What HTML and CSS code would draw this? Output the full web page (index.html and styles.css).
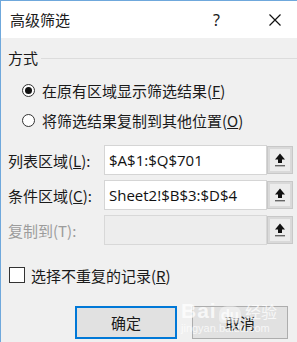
FILE: index.html
```html
<!DOCTYPE html>
<html lang="zh">
<head>
<meta charset="utf-8">
<link rel="stylesheet" href="styles.css">
</head>
<body>
<div class="dialog">
  <div class="titlebar">
    <span class="title">高级筛选</span>
    <span class="help">?</span>
    <span class="close">
      <svg width="12" height="12" viewBox="0 0 12 12"><path d="M0.5 0.5 L11.5 11.5 M11.5 0.5 L0.5 11.5" stroke="#111" stroke-width="1.2" fill="none"/></svg>
    </span>
  </div>
  <div class="content">
    <div class="group-head"><span>方式</span><span class="rule"></span></div>
    <div class="radio-row">
      <span class="radio checked"></span><span>在原有区域显示筛选结果(<u>F</u>)</span>
    </div>
    <div class="radio-row">
      <span class="radio"></span><span>将筛选结果复制到其他位置(<u>O</u>)</span>
    </div>
    <div class="fields">
      <div class="field">
        <span class="label">列表区域(<u>L</u>):</span>
        <span class="input">$A$1:$Q$701</span>
        <span class="picker"><svg width="12" height="16" viewBox="0 0 12 16"><path d="M6 1.5 L11 7.5 H8 V11 H4 V7.5 H1 Z" fill="#111"/><rect x="1" y="13" width="10" height="1.4" fill="#666"/></svg></span>
      </div>
      <div class="field">
        <span class="label">条件区域(<u>C</u>):</span>
        <span class="input">Sheet2!$B$3:$D$4</span>
        <span class="picker"><svg width="12" height="16" viewBox="0 0 12 16"><path d="M6 1.5 L11 7.5 H8 V11 H4 V7.5 H1 Z" fill="#111"/><rect x="1" y="13" width="10" height="1.4" fill="#666"/></svg></span>
      </div>
      <div class="field disabled">
        <span class="label">复制到(T):</span>
        <span class="input"></span>
        <span class="picker"><svg width="12" height="16" viewBox="0 0 12 16"><path d="M6 1.5 L11 7.5 H8 V11 H4 V7.5 H1 Z" fill="#111"/><rect x="1" y="13" width="10" height="1.4" fill="#666"/></svg></span>
      </div>
    </div>
    <div class="check-row">
      <span class="checkbox"></span><span>选择不重复的记录(<u>R</u>)</span>
    </div>
    <div class="buttons">
      <span class="btn default">确定</span>
      <span class="btn">取消</span>
    </div>
  </div>
  <div class="watermark">
    <div class="wm-top"><span class="wm-bai">Bai</span><span class="wm-du">du</span><span class="wm-jy">经验</span></div>
    <div class="wm-url">jingyan.baidu.com</div>
  </div>
</div>
</body>
</html>
```
FILE: styles.css
```css
html, body {
  margin: 0;
  padding: 0;
  background: #f0f0f0;
}
body {
  font-family: "Noto Sans CJK SC", "Noto Sans", sans-serif;
  font-size: 15px;
  color: #1a1a1a;
  width: 297px;
  height: 342px;
  overflow: hidden;
}
.dialog {
  position: relative;
  height: 341px;
  border-top: 1px solid #6fa8dc;
  border-left: 1px solid #6fa8dc;
}
.titlebar {
  height: 37px;
  background: #fff;
  display: flex;
  align-items: center;
  padding-left: 9px;
}
.title {
  flex: 1;
  line-height: 20px;
}
.help {
  width: 56px;
  font-family: "Noto Sans", sans-serif;
  font-size: 16px;
  line-height: 20px;
}
.close {
  width: 28px;
  display: flex;
  align-items: center;
}
.content {
  padding-left: 7px;
}
.group-head {
  margin-top: 10px;
  height: 20px;
  display: flex;
  align-items: center;
  gap: 3px;
  line-height: 20px;
}
.rule {
  flex: 1;
  height: 1px;
  background: #dcdcdc;
  margin-top: 1px;
}
.radio-row {
  height: 30px;
  display: flex;
  align-items: center;
  gap: 7px;
  padding-left: 14px;
}
.group-head + .radio-row { margin-top: 7px; }
.radio {
  width: 11px;
  height: 11px;
  border: 1px solid #333;
  border-radius: 50%;
  background: #fff;
  display: flex;
  align-items: center;
  justify-content: center;
}
.radio.checked::after {
  content: "";
  width: 7px;
  height: 7px;
  border-radius: 50%;
  background: #111;
}
.fields {
  margin-top: 10px;
  display: flex;
  flex-direction: column;
  gap: 5px;
}
.field {
  display: grid;
  grid-template-columns: 96px 163px 26px;
  height: 30px;
  align-items: center;
}
.label {
  line-height: 20px;
  padding-top: 1px;
}
.input {
  box-sizing: border-box;
  height: 30px;
  border: 1px solid #d5d5d5;
  background: #fff;
  font-family: "Open Sans", "Noto Sans", sans-serif;
  font-size: 15px;
  line-height: 28px;
  padding-left: 4px;
  color: #111;
}
.picker {
  box-sizing: border-box;
  height: 28px;
  border: 1px solid #c8c8c8;
  box-shadow: inset 0 0 0 2px #d9d9d9;
  background: #ececec;
  display: flex;
  align-items: center;
  justify-content: center;
}
.field.disabled .label { color: #9c9c9c; }
.field.disabled .input { background: #ededed; border-color: #d8d8d8; }
.check-row {
  margin-top: 20px;
  height: 20px;
  display: flex;
  align-items: center;
  gap: 6px;
  padding-left: 1px;
}
.checkbox {
  width: 14px;
  height: 14px;
  border: 1px solid #333;
  background: #fff;
}
.buttons {
  margin-top: 21px;
  display: flex;
  justify-content: flex-end;
  gap: 15px;
  padding-right: 9px;
}
.btn {
  box-sizing: border-box;
  width: 96px;
  height: 33px;
  border: 1px solid #adadad;
  background: #e1e1e1;
  display: flex;
  align-items: center;
  justify-content: center;
}
.btn.default {
  width: 102px;
  border: 2px solid #0078d7;
}
.watermark {
  position: absolute;
  left: 180px;
  top: 292px;
  color: rgba(255, 255, 255, 0.75);
  font-family: "Liberation Sans", sans-serif;
  pointer-events: none;
}
.wm-top {
  display: flex;
  align-items: flex-end;
  height: 30px;
}
.wm-bai { font-size: 21px; font-weight: bold; letter-spacing: 1px; }
.wm-du {
  font-size: 15px;
  font-weight: bold;
  margin-left: 2px;
  padding: 0 2px;
  border-radius: 8px 8px 4px 4px;
  background: rgba(255, 255, 255, 0.4);
}
.wm-jy { font-family: "Noto Sans CJK SC", sans-serif; font-size: 16px; margin-left: 4px; }
.wm-url { font-size: 11px; margin-top: -1px; }
```
